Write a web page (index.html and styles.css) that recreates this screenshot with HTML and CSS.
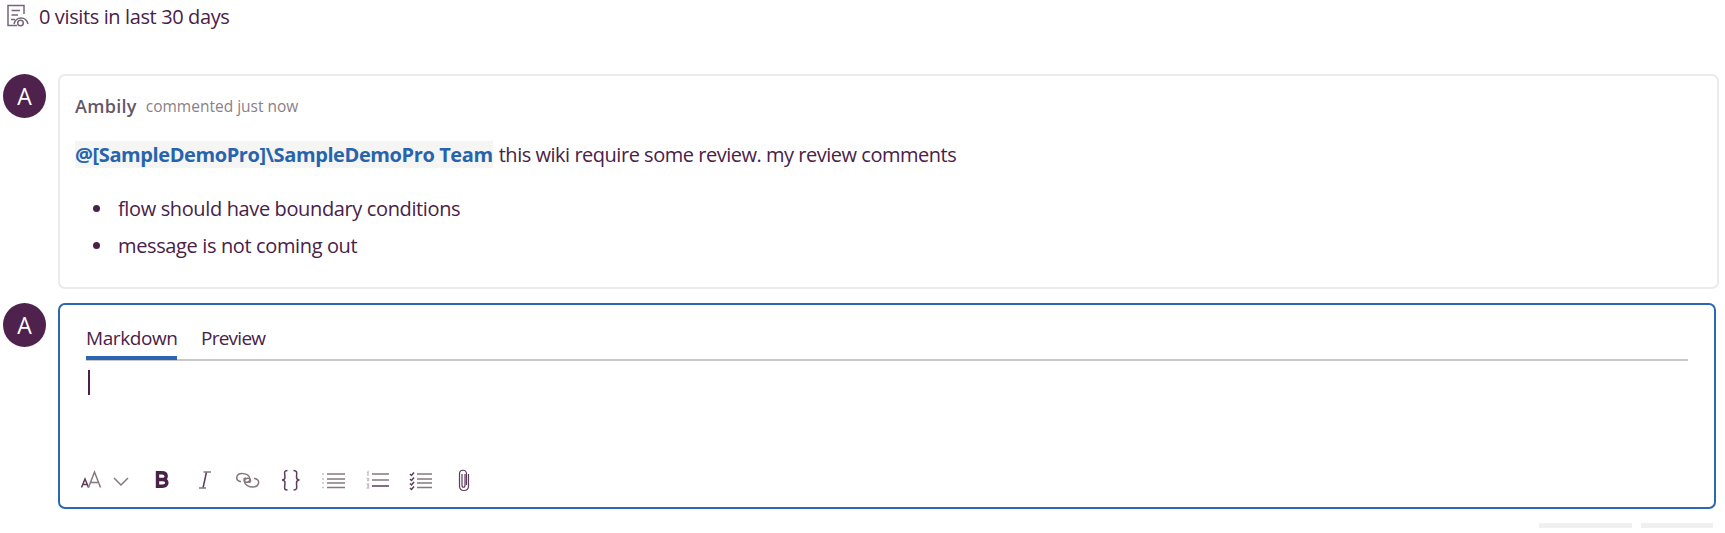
FILE: index.html
```html
<!DOCTYPE html>
<html lang="en">
<head>
<meta charset="utf-8">
<title>Wiki comments</title>
<link rel="stylesheet" href="styles.css">
</head>
<body>
<main class="page">
  <header class="visits">
    <svg class="visits-icon" width="24" height="24" viewBox="0 0 24 24"><path d="M17 10V1.500H1v20h9M4.500 6.500H13M4.500 11H11M4 15.500h4M7 20c2-8 12-8 14 0"/><circle cx="13.500" cy="19" r="2.800"/></svg>
    <span class="visits-text">0 visits in last 30 days</span>
  </header>

  <section class="row">
    <div class="avatar"><span>A</span></div>
    <article class="card">
      <div class="meta"><b class="author">Ambily</b><span class="time">commented just now</span></div>
      <p class="message"><a class="mention">@[SampleDemoPro]\SampleDemoPro Team</a><span class="message-text">this wiki require some review. my review comments</span></p>
      <ul class="points">
        <li><span>flow should have boundary conditions</span></li>
        <li><span>message is not coming out</span></li>
      </ul>
    </article>
  </section>

  <section class="row row-editor">
    <div class="avatar"><span>A</span></div>
    <div class="editor">
      <nav class="tabs"><span class="tab-active">Markdown</span><span class="tab-preview">Preview</span></nav>
      <div class="input"><span class="caret"></span></div>
      <div class="toolbar">
        <svg width="50" height="28" viewBox="0 0 50 28"><path class="dark" d="M1.500 21.500 5 13l3.500 8.500M2.500 18.500h5"/><path d="M8.500 21.500 14.500 6l6 15.500M10.500 16.500h8M34 12l7 7 7-7"/></svg>
        <svg width="16" height="28" viewBox="0 0 16 28"><path class="bold" d="M2.500 6.800v13.400h5c6 0 5.500-6.700.5-6.700H3h4.500c5 0 5-6.700-.5-6.700z"/></svg>
        <svg width="12" height="28" viewBox="0 0 12 28"><path class="dark" d="M7.500 6 4 22"/><path d="M4.500 6H12M0 22h7"/></svg>
        <svg width="24" height="28" viewBox="0 0 24 28"><path d="M5 15.500H4C-1 14 0 7.500 6 7.500c4 0 8 2 8 5.500 0 4-6 4.500-6 1 0-1.500 1-2 2-2"/><path d="M18 12.500h1c6 1.500 4 8.500-2 8.500-4 0-8.500-2-8.500-5.500 0-4 6-4.500 6-1 0 1.500-1 2-2 2"/></svg>
        <svg width="20" height="28" viewBox="0 0 20 28"><path class="brace" d="M6.500 4.500C2 4.500 4 8 4 11q0 3-3 3 3 0 3 3c0 4-2 7 2.500 7M12.500 4.500c4.500 0 3 3.500 3 6.500q0 3 3 3-3 0-3 3c0 4 1.500 7-3 7"/></svg>
        <svg width="23" height="28" viewBox="0 0 23 28"><path d="M5 8h18M5 13h18M5 17h18M5 21.500h18"/><path class="faint" d="M0 8h2M0 13h2M0 17h2M0 21.500h2"/></svg>
        <svg width="23" height="28" viewBox="0 0 23 28"><path d="M6 8h17M6 14h17"/><path class="faint" d="M1 7l1-1v4M.500 12.500h2v2H1M.500 18h2v4h-2M1 20h1.500"/><path class="dark" d="M6 20h17"/></svg>
        <svg width="23" height="28" viewBox="0 0 23 28"><path d="M8 8h15M8 13h15M8 17h15M8 21.500h15"/><path class="check" d="m1 8 1.500 1.500L5 6.500M1 13l1.500 1.500L5 11.500M1 17.500 2.500 19 5 16M1 22l1.500 1.500L5 20.500"/></svg>
        <svg width="14" height="28" viewBox="0 0 14 28"><path class="clip" d="M8.500 19V8c0-5-7-5-7 0v12c0 6 9 6 9 0V8M4 8v11c0 3 3 3 3 0V8"/></svg>
      </div>
    </div>
  </section>
  <footer class="actions"><span class="button-wide"></span><span class="button-narrow"></span></footer>
</main>
</body>
</html>
```
FILE: styles.css
```css
* { box-sizing: border-box; }
body { margin: 0; background: #fff; color: #4a2149; font-family: "Open Sans", "Noto Sans", sans-serif; }
.page { height: 533px; overflow: hidden; padding: 1px 6px 0 3px; }
.visits { display: flex; height: 30px; align-items: center; gap: 8px; padding-left: 4px; }
.visits-icon { flex: none; stroke: #77667a; }
svg { display: block; fill: none; stroke: #85787f; stroke-width: 1.5; }
.visits-text { font-size: 20px; letter-spacing: -0.38px; white-space: nowrap; }
.row { display: flex; margin-top: 43px; gap: 12px; align-items: flex-start; }
.row-editor { margin-top: 14px; padding-right: 3px; }
.avatar { display: flex; flex: none; width: 43px; height: 44px; border-radius: 50%; background: #4e224d; color: #fff; justify-content: center; align-items: center; font-size: 23px; }
.card { flex: 1; height: 215px; border: 2px solid #ebebeb; border-radius: 7px; padding: 15px 15px 0; }
.meta { display: flex; height: 30px; align-items: center; gap: 9px; white-space: nowrap; }
.author { font-size: 18px; font-weight: 600; color: #65576a; letter-spacing: 0.3px; }
.time { font-size: 15.5px; color: #8a8088; }
.message { display: flex; height: 27px; margin: 20px 0 0; gap: 6px; font-size: 20px; line-height: 28px; white-space: nowrap; }
.mention { height: 27px; background: #f5f5f3; color: #2864ae; font-weight: 700; letter-spacing: -0.4px; }
.message-text { letter-spacing: -0.48px; }
.points { margin: 22px 0 0; padding: 0 0 0 43px; font-size: 20px; line-height: 37px; list-style: none; white-space: nowrap; letter-spacing: -0.37px; }
.points li { display: flex; align-items: center; gap: 18px; margin-left: -25px; height: 37px; }
.points li::before { content: ""; width: 7px; height: 7px; border-radius: 50%; background: #4a2149; }
.editor { flex: 1; height: 206px; border: 2px solid #2b68b0; border-radius: 7px; padding: 15px 26px 0; }
.tabs { display: flex; height: 41px; gap: 24px; border-bottom: 2px solid #c8c8c8; font-size: 19px; line-height: 37px; white-space: nowrap; }
.tab-active { width: 91px; height: 40px; border-bottom: 4px solid #2b64b0; letter-spacing: -0.4px; }
.tab-preview { letter-spacing: -0.75px; }
.input { height: 105px; padding: 9px 0 0 2px; }
.caret { display: block; width: 2px; height: 25px; background: #4a2149; }
.toolbar { display: grid; grid-template-columns: 75px 44px 37px 45px 41px 44px 43px 49px 14px; margin-left: -6px; }
.dark, .brace, .check, .clip { stroke: #5d3c5c; }
.clip { stroke-width: 1.2; }
.bold { stroke: #4a2149; stroke-width: 3.4; }
.faint { stroke: #c8c1c6; }
.actions { display: flex; justify-content: flex-end; gap: 9px; padding: 14px 6px 0 0; }
.button-wide, .button-narrow { width: 93px; height: 5px; background: #f0f0f0; }
.button-narrow { width: 72px; }
```
